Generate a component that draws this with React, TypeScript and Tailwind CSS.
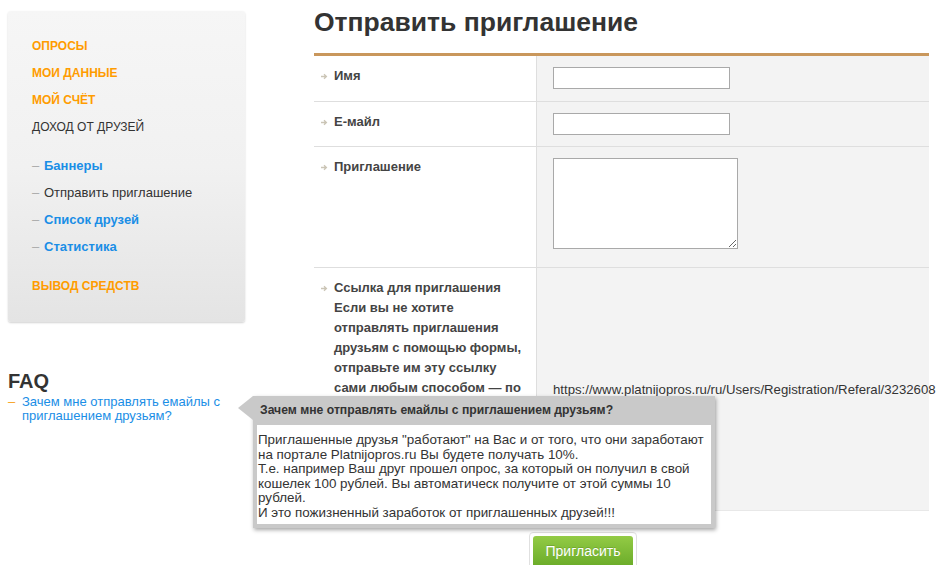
import React from "react";

const Arrow = () => (
  <svg width="7" height="7" viewBox="0 0 7 7" className="shrink-0">
    <path d="M0 3.5 H5 M3 1.3 L5.4 3.5 L3 5.7" stroke="#cbc5b6" strokeWidth="1.3" fill="none" />
  </svg>
);

const Label = ({ children }: { children: React.ReactNode }) => (
  <div className="pl-[7px] pt-[10px]">
    <div className="flex h-[20px] items-center gap-[6px]">
      <Arrow />
      <span className="text-[13px] font-bold text-[#444]">{children}</span>
    </div>
  </div>
);

export default function App() {
  return (
    <div className="relative w-[945px] h-[565px] overflow-hidden bg-white font-['Liberation_Sans',Arial,sans-serif] text-[#333]">
      <div className="flex">
        {/* Sidebar */}
        <aside className="ml-2 mt-[11px] w-[237px] shrink-0">
          <nav className="rounded-[3px] bg-gradient-to-b from-[#f6f6f6] via-[#f1f1f1] to-[#e4e4e4] shadow-[0_1px_2px_rgba(0,0,0,0.18)] pl-6 pt-[22px] pb-[22px]">
            <div className="h-[27px] leading-[27px] text-[12px] font-bold text-[#ff9c00]">ОПРОСЫ</div>
            <div className="h-[27px] leading-[27px] text-[12px] font-bold text-[#ff9c00]">МОИ ДАННЫЕ</div>
            <div className="h-[27px] leading-[27px] text-[12px] font-bold text-[#ff9c00]">МОЙ СЧЁТ</div>
            <div className="h-[27px] leading-[27px] text-[12px] text-[#333]">ДОХОД ОТ ДРУЗЕЙ</div>
            <div className="mt-[11px]">
              {[
                { t: "Баннеры", a: true },
                { t: "Отправить приглашение", a: false },
                { t: "Список друзей", a: true },
                { t: "Статистика", a: true },
              ].map((i) => (
                <div key={i.t} className="flex h-[27px] items-center text-[13px]">
                  <span className="w-3 text-[#aaa]">–</span>
                  <span className={i.a ? "font-bold text-[#1a8ee6]" : "text-[#333]"}>{i.t}</span>
                </div>
              ))}
            </div>
            <div className="mt-[13px] h-[27px] leading-[27px] text-[12px] font-bold text-[#ff9c00]">ВЫВОД СРЕДСТВ</div>
          </nav>

          <div className="mt-[47px]">
            <h2 className="text-[20px] font-bold leading-[24px] text-[#333]">FAQ</h2>
            <div className="mt-[2px] flex text-[13px] leading-[14px]">
              <span className="w-[14px] shrink-0 text-[#f7a21b]">–</span>
              <span className="text-[#1a8ee6]">
                Зачем мне отправлять емайлы с<br />приглашением друзьям?
              </span>
            </div>
          </div>
        </aside>

        {/* Main */}
        <main className="ml-[69px] w-[615px] shrink-0">
          <h1 className="mt-[7px] h-[30px] text-[26.5px] font-bold leading-[30px] text-[#333]">
            Отправить приглашение
          </h1>
          <div className="mt-[16px] border-t-[3px] border-[#c9975c]">
            {/* Row 1 */}
            <div className="grid grid-cols-[222px_minmax(0,1fr)] border-b border-[#dedede]">
              <Label>Имя</Label>
              <div className="border-l border-[#dedede] bg-[#f3f3f3] pl-4 pt-[11px] pb-[12px]">
                <input className="block h-[22px] w-[177px] border border-[#a9a9a9] bg-white" />
              </div>
            </div>
            {/* Row 2 */}
            <div className="grid grid-cols-[222px_minmax(0,1fr)] border-b border-[#dedede]">
              <Label>Е-майл</Label>
              <div className="border-l border-[#dedede] bg-[#f3f3f3] pl-4 pt-[11px] pb-[11px]">
                <input className="block h-[22px] w-[177px] border border-[#a9a9a9] bg-white" />
              </div>
            </div>
            {/* Row 3 */}
            <div className="grid grid-cols-[222px_minmax(0,1fr)] border-b border-[#dedede]">
              <Label>Приглашение</Label>
              <div className="border-l border-[#dedede] bg-[#f3f3f3] pl-4 pt-[11px] pb-[18px]">
                <textarea className="block h-[91px] w-[185px] border border-[#a9a9a9] bg-white" />
              </div>
            </div>
            {/* Row 4 */}
            <div className="grid h-[243px] grid-cols-[222px_minmax(0,1fr)] border-b border-[#e8e8e8]">
              <div className="flex gap-[6px] overflow-hidden pl-[7px] pt-[10px]">
                <div className="flex h-[20px] items-center">
                  <Arrow />
                </div>
                <p className="w-[194px] text-[13px] font-bold leading-[20px] text-[#444]">
                  Ссылка для приглашения
                  <br />
                  Если вы не хотите отправлять приглашения друзьям с помощью формы, отправьте им эту ссылку сами любым способом — по почте, в ICQ, Skype, в социальных сетях или на форумах.
                </p>
              </div>
              <div className="flex min-w-0 items-center border-l border-[#dedede] bg-[#f3f3f3] pl-4 pt-[1px]">
                <span className="whitespace-nowrap text-[13.2px] text-[#333]">
                  https://www.platnijopros.ru/ru/Users/Registration/Referal/3232608
                </span>
              </div>
            </div>
          </div>

          <div className="ml-[215px] mt-[21px] inline-block rounded-[4px] border border-[#e0e0e0] p-[3px]">
            <button className="h-[31px] w-[100px] rounded-[3px] bg-gradient-to-b from-[#93cb45] to-[#6aab28] text-[14px] text-white [text-shadow:0_-1px_0_rgba(0,0,0,0.15)]">
              Пригласить
            </button>
          </div>
        </main>
      </div>

      {/* Tooltip */}
      <div className="absolute left-[253px] top-[396px] w-[462px] bg-[#c9c9c9] px-[4px] pb-[4px] shadow-[1px_2px_4px_rgba(0,0,0,0.35)]">
        <div className="absolute left-[-15px] top-0 h-0 w-0 border-y-[12px] border-r-[15px] border-y-transparent border-r-[#c9c9c9]" />
        <div className="h-[29px] pl-[3px] text-[12.2px] font-bold leading-[29px] text-[#333]">
          Зачем мне отправлять емайлы с приглашением друзьям?
        </div>
        <div className="bg-white pl-[1px] pt-[8px] pb-[3px] text-[13.4px] leading-[14.6px] text-[#333] whitespace-nowrap">
          Приглашенные друзья "работают" на Вас и от того, что они заработают
          <br />
          на портале Platnijopros.ru Вы будете получать 10%.
          <br />
          Т.е. например Ваш друг прошел опрос, за который он получил в свой
          <br />
          кошелек 100 рублей. Вы автоматическ получите от этой суммы 10
          <br />
          рублей.
          <br />
          И это пожизненный заработок от приглашенных друзей!!!
        </div>
      </div>
    </div>
  );
}
